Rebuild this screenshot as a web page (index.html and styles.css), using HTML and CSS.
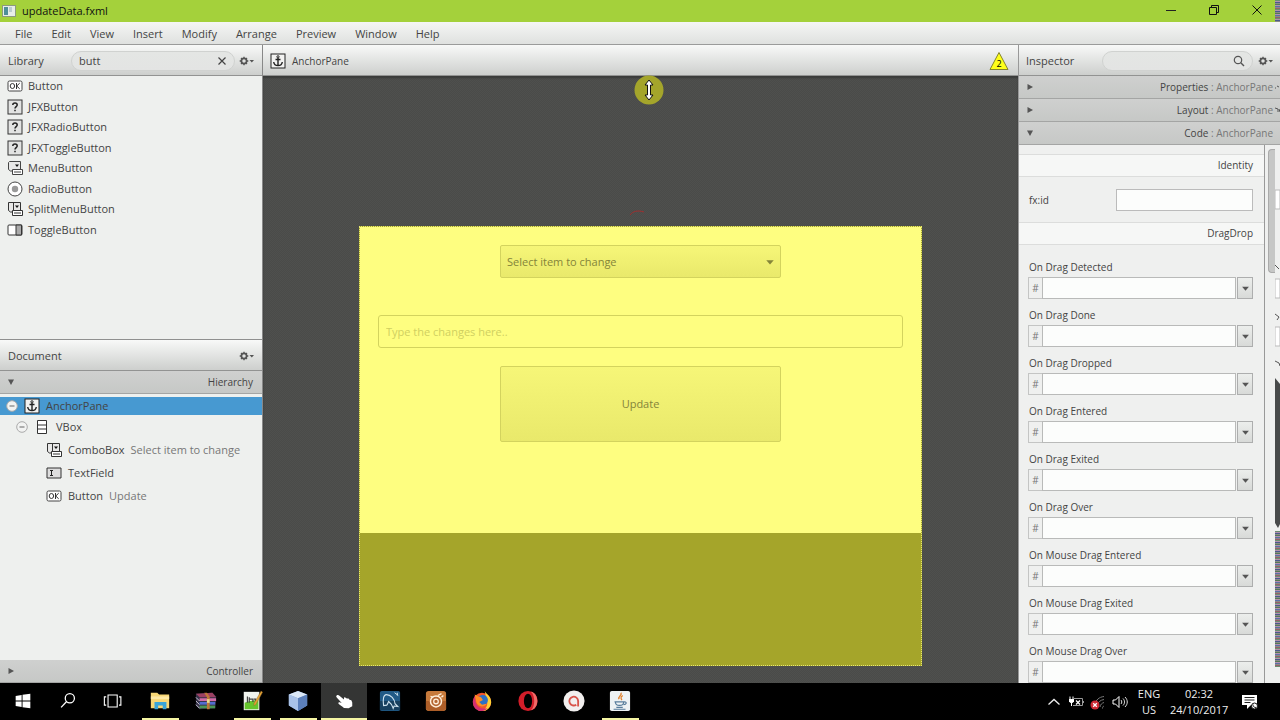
FILE: index.html
```html
<!DOCTYPE html>
<html lang="en">
<head>
<meta charset="utf-8">
<title>updateData.fxml</title>
<link rel="stylesheet" href="styles.css">
</head>
<body>
<svg class="defs" aria-hidden="true">
  <defs>
    <symbol id="i-ok" viewBox="0 0 16 16"><rect x="1" y="3" width="14" height="10" rx="1.500" fill="#fff" stroke="#444"/><ellipse cx="5.400" cy="8" rx="2.200" ry="2.500" fill="none" stroke="#333"/><path d="M9.500 5v6M12.700 5.200L9.700 8l3 2.800" fill="none" stroke="#333"/></symbol>
    <symbol id="i-unknown" viewBox="0 0 16 16"><rect x="1" y="1" width="14" height="14" fill="#e2e3e2" stroke="#333"/><path d="M5.800 6c0-2.600 4.400-2.600 4.400 0 0 1.500-2.200 1.700-2.200 3.400M8 10.800v1.500" fill="none" stroke="#222" stroke-width="1.500"/></symbol>
    <symbol id="i-menubtn" viewBox="0 0 16 16"><path d="M5 11H3.500L1.500 9.500v-7l1-1h11v8" fill="#e8e8e7" stroke="#444"/><path d="M8 4.500h4L10 7z" fill="#111"/><path d="M5.500 9.500h10v5h-10zM7 12h7" fill="#fff" stroke="#444"/></symbol>
    <symbol id="i-splitbtn" viewBox="0 0 16 16"><path d="M5 11H3.500L1.500 9.500v-8h12v8M6.500 1.500v8" fill="#e8e8e7" stroke="#333"/><path d="M8 4.500h4L10 7z" fill="#111"/><path d="M5.500 9.500h10v5h-10zM7 12h7" fill="#fff" stroke="#333"/></symbol>
    <symbol id="i-radio" viewBox="0 0 16 16"><circle cx="8" cy="8" r="7" fill="#fff" stroke="#444"/><circle cx="8" cy="8" r="3.200" fill="#999"/></symbol>
    <symbol id="i-toggle" viewBox="0 0 16 16"><rect x="1" y="3" width="14" height="10" rx="1" fill="#fff" stroke="#333"/><path d="M9 3h5.500v10H9z" fill="#aaa" stroke="#333"/></symbol>
    <symbol id="i-anchor" viewBox="0 0 16 16"><rect x="1" y="1" width="14" height="14" fill="#f2f2f1" stroke="#222"/><circle cx="8" cy="3.800" r="1.100" fill="none" stroke="#222"/><path d="M8 5v7.500M5.500 6.500h5M3.700 9c.3 2.400 2 3.600 4.300 3.600S12 11.400 12.300 9" fill="none" stroke="#222" stroke-width="1.400"/></symbol>
    <symbol id="i-vbox" viewBox="0 0 16 16"><path d="M3.500 1.500h9v13h-9zM3.500 6h9M3.500 10h9" fill="#fff" stroke="#333"/></symbol>
    <symbol id="i-textfield" viewBox="0 0 16 16"><path d="M1 3h14v10H1z" fill="#ddd" stroke="#333"/><path d="M4 5.500h3M4 10.500h3M5.500 5.500v5" stroke="#222"/></symbol>
    <symbol id="i-gear" viewBox="0 0 16 10"><circle cx="5" cy="5" r="2.600" fill="none" stroke="#555" stroke-width="1.700"/><path d="M5 .7v1.600M5 7.700v1.600M.7 5h1.600M7.700 5h1.600M2 2l1 1M7 7l1 1M8 2L7 3M3 7L2 8" stroke="#555" stroke-width="1.300"/><path d="M10.500 4h4.500l-2.200 2.600z" fill="#555"/></symbol>
    <symbol id="i-minus" viewBox="0 0 12 12"><circle cx="6" cy="6" r="5.300" fill="#f2f3f2" stroke="#aaa"/><path d="M3.500 6h5" stroke="#666"/></symbol>
    <symbol id="i-right" viewBox="0 0 8 8"><path d="M1.500 1L7 4 1.500 7z" fill="#555"/></symbol>
    <symbol id="i-down" viewBox="0 0 8 8"><path d="M1 1.500h6L4 7z" fill="#555"/></symbol>
    <symbol id="i-caret" viewBox="0 0 8 8"><path d="M1 2.500h6L4 6z" fill="currentColor"/></symbol>
  </defs>
</svg>

<header class="titlebar">
  <svg class="app-icon" viewBox="0 0 14 12"><rect x=".5" y=".5" width="13" height="11" fill="#e8eee8" stroke="#8d9a80"/><path d="M2 2h4v8H2z" fill="#4f8f98"/><path d="M7 2h3v5H7z" fill="#bccdd0"/></svg>
  <h1 class="title">updateData.fxml</h1>
  <div class="window-buttons">
    <button aria-label="Minimize"><svg viewBox="0 0 12 12"><path d="M1 6.500h10" stroke="#222" fill="none"/></svg></button>
    <button aria-label="Restore"><svg viewBox="0 0 12 12"><path d="M1.500 3.500h7v7h-7zM3.500 3V1.500h7v7H9" stroke="#111" fill="none"/></svg></button>
    <button aria-label="Close"><svg viewBox="0 0 12 12"><path d="M1.500 1.500l9 9M10.500 1.500l-9 9" stroke="#111" fill="none"/></svg></button>
  </div>
</header>

<nav class="menubar">
  <button>File</button><button>Edit</button><button>View</button><button>Insert</button><button>Modify</button><button>Arrange</button><button>Preview</button><button>Window</button><button>Help</button>
</nav>

<main class="workspace">
  <div class="side">
    <section class="library">
      <div class="bar">
        <h2 class="bar-title">Library</h2>
        <div class="search">
          <input type="text" value="butt" aria-label="Search library">
          <button aria-label="Clear"><svg class="clear" viewBox="0 0 10 10"><path d="M1.500 1.500l7 7M8.500 1.500l-7 7" stroke="#444" stroke-width="1.200"/></svg></button>
        </div>
        <button class="gear" aria-label="Library options"><svg><use href="#i-gear"/></svg></button>
      </div>
      <ul class="items">
        <li><svg class="icon"><use href="#i-ok"/></svg>Button</li>
        <li><svg class="icon"><use href="#i-unknown"/></svg>JFXButton</li>
        <li><svg class="icon"><use href="#i-unknown"/></svg>JFXRadioButton</li>
        <li><svg class="icon"><use href="#i-unknown"/></svg>JFXToggleButton</li>
        <li><svg class="icon"><use href="#i-menubtn"/></svg>MenuButton</li>
        <li><svg class="icon"><use href="#i-radio"/></svg>RadioButton</li>
        <li><svg class="icon"><use href="#i-splitbtn"/></svg>SplitMenuButton</li>
        <li><svg class="icon"><use href="#i-toggle"/></svg>ToggleButton</li>
      </ul>
    </section>
    <section class="document">
      <div class="bar">
        <h2 class="bar-title">Document</h2>
        <button class="gear" aria-label="Document options"><svg><use href="#i-gear"/></svg></button>
      </div>
      <button class="fold"><svg class="tri"><use href="#i-down"/></svg><span>Hierarchy</span></button>
      <ul class="tree">
        <li class="selected"><svg class="toggle"><use href="#i-minus"/></svg><svg class="icon"><use href="#i-anchor"/></svg>AnchorPane</li>
        <li class="level-1"><svg class="toggle"><use href="#i-minus"/></svg><svg class="icon"><use href="#i-vbox"/></svg>VBox</li>
        <li class="level-2"><svg class="icon"><use href="#i-splitbtn"/></svg>ComboBox<span class="info">Select item to change</span></li>
        <li class="level-2"><svg class="icon"><use href="#i-textfield"/></svg>TextField</li>
        <li class="level-2"><svg class="icon"><use href="#i-ok"/></svg>Button<span class="info">Update</span></li>
      </ul>
      <button class="fold"><svg class="tri"><use href="#i-right"/></svg><span>Controller</span></button>
    </section>
  </div>

  <section class="editor">
    <div class="bar">
      <svg class="icon"><use href="#i-anchor"/></svg>
      <span class="crumb">AnchorPane</span>
      <svg class="warning" viewBox="0 0 20 20"><path d="M10 1.500L19 18.500H1z" fill="#ffff1a" stroke="#85852a"/><text x="10" y="16" text-anchor="middle">2</text></svg>
    </div>
    <div class="stage">
      <svg class="cursor" viewBox="0 0 30 30"><circle cx="15" cy="15" r="14.500" fill="#a4a52b"/><path d="M15 5l4 5h-2.500v10H19l-4 5-4-5h2.500V10H11z" fill="#fff" stroke="#111"/></svg>
      <svg class="trace" viewBox="0 0 20 8"><path d="M2 6c3-4 8-5 14-3" fill="none" stroke="#a02f2f"/></svg>
      <form class="scene">
        <div class="vbox">
          <div class="combo">
            <select aria-label="Item"><option>Select item to change</option></select>
            <svg class="combo-arrow"><use href="#i-caret"/></svg>
          </div>
          <input class="change" type="text" placeholder="Type the changes here.." aria-label="Changes">
          <button class="update" type="button">Update</button>
        </div>
      </form>
    </div>
  </section>

  <aside class="inspector">
    <div class="bar">
      <h2 class="bar-title">Inspector</h2>
      <div class="search">
        <input type="text" aria-label="Search inspector">
        <svg class="lens" viewBox="0 0 12 12"><circle cx="5" cy="5" r="3.700" fill="none" stroke="#555" stroke-width="1.200"/><path d="M7.800 7.800L11 11" stroke="#555" stroke-width="1.400"/></svg>
      </div>
      <button class="gear" aria-label="Inspector options"><svg><use href="#i-gear"/></svg></button>
    </div>
    <button class="fold"><svg class="tri"><use href="#i-right"/></svg><span>Properties <i>: AnchorPane</i></span></button>
    <button class="fold"><svg class="tri"><use href="#i-right"/></svg><span>Layout <i>: AnchorPane</i></span></button>
    <button class="fold"><svg class="tri"><use href="#i-down"/></svg><span>Code <i>: AnchorPane</i></span></button>
    <div class="props">
      <div class="props-body">
        <h3 class="group">Identity</h3>
        <div class="fxid"><label for="fxid">fx:id</label><input id="fxid" type="text"></div>
        <h3 class="group">DragDrop</h3>
        <div class="events">
          <div class="event"><label for="e1">On Drag Detected</label><div class="field"><span>#</span><input id="e1" type="text"><button aria-label="Choose"><svg><use href="#i-caret"/></svg></button></div></div>
          <div class="event"><label for="e2">On Drag Done</label><div class="field"><span>#</span><input id="e2" type="text"><button aria-label="Choose"><svg><use href="#i-caret"/></svg></button></div></div>
          <div class="event"><label for="e3">On Drag Dropped</label><div class="field"><span>#</span><input id="e3" type="text"><button aria-label="Choose"><svg><use href="#i-caret"/></svg></button></div></div>
          <div class="event"><label for="e4">On Drag Entered</label><div class="field"><span>#</span><input id="e4" type="text"><button aria-label="Choose"><svg><use href="#i-caret"/></svg></button></div></div>
          <div class="event"><label for="e5">On Drag Exited</label><div class="field"><span>#</span><input id="e5" type="text"><button aria-label="Choose"><svg><use href="#i-caret"/></svg></button></div></div>
          <div class="event"><label for="e6">On Drag Over</label><div class="field"><span>#</span><input id="e6" type="text"><button aria-label="Choose"><svg><use href="#i-caret"/></svg></button></div></div>
          <div class="event"><label for="e7">On Mouse Drag Entered</label><div class="field"><span>#</span><input id="e7" type="text"><button aria-label="Choose"><svg><use href="#i-caret"/></svg></button></div></div>
          <div class="event"><label for="e8">On Mouse Drag Exited</label><div class="field"><span>#</span><input id="e8" type="text"><button aria-label="Choose"><svg><use href="#i-caret"/></svg></button></div></div>
          <div class="event"><label for="e9">On Mouse Drag Over</label><div class="field"><span>#</span><input id="e9" type="text"><button aria-label="Choose"><svg><use href="#i-caret"/></svg></button></div></div>
        </div>
      </div>
      <div class="scroll"><div class="thumb"></div></div>
    </div>
  </aside>
</main>

<svg class="edge" viewBox="0 0 5 683" aria-hidden="true">
  <defs><pattern id="noise" width="5" height="9" patternUnits="userSpaceOnUse"><path d="M0 .5h5" stroke="#6a8f70"/><path d="M0 1.500h5M0 5.500h5" stroke="#b58fae"/><path d="M0 2.500h5" stroke="#4a5a8c"/><path d="M0 3.500h5M0 7.500h5" stroke="#8a8a88"/><path d="M0 4.500h5" stroke="#557a55"/><path d="M0 6.500h5" stroke="#5b6fa8"/><path d="M0 8.500h5" stroke="#97606b"/></pattern></defs>
  <path d="M0 0h5v22H0z" fill="url(#noise)"/>
  <path d="M0 190h5v19H0zM0 279h5v19H0zM0 327h5v19H0z" fill="#fff" stroke="#bbb"/>
  <path d="M0 88h1M2 86l2 1M0 108l3 1v3M4 109l1 3M0 265l4 4M0 314l4 3-2 3M0 361l4 2 1 3" fill="none" stroke="#555"/>
  <path d="M0 378l5 6v140l-2 4-3-5z" fill="#484a4a"/>
  <path d="M0 531h5v136H0z" fill="url(#noise)"/>
</svg>

<footer class="taskbar">
  <div class="apps">
    <button aria-label="Start"><svg viewBox="0 0 24 24"><path d="M4 6.500l6.500-1v6H4zM11.500 5.300L20 4v7.500h-8.500zM4 12.500h6.500v6l-6.500-1zM11.500 12.500H20V20l-8.500-1.300z" fill="#fff"/></svg></button>
    <button aria-label="Search"><svg viewBox="0 0 24 24"><circle cx="14" cy="9" r="5" fill="none" stroke="#fff" stroke-width="1.400"/><path d="M10.500 12.500L4.500 19" stroke="#fff" stroke-width="1.400"/></svg></button>
    <button aria-label="Task view"><svg viewBox="0 0 24 24"><path d="M5.500 5.500h10v13h-10zM3.500 7.500h-2v9h2M17.500 7.500h2v9h-2" fill="none" stroke="#fff" stroke-width="1.200"/></svg></button>
    <button class="running" aria-label="File Explorer"><svg viewBox="0 0 24 24"><path d="M2 3h7l2 2h11v15H2z" fill="#f8d775"/><path d="M2 7h20v3H2z" fill="#ffe9a5"/><path d="M6 21v-8h13v8h-4v-4h-5v4z" fill="#3aa5d8"/></svg></button>
    <button aria-label="WinRAR"><svg viewBox="0 0 24 24"><path d="M1 4l18-1 4 4v5l-1 8-17 1-4-4z" fill="#343047"/><path d="M1 4l4 4h18l-4-5z" fill="#9c4063"/><path d="M5 9h18v3H5z" fill="#d36ba6"/><path d="M5 13h17v3H5z" fill="#536cd0"/><path d="M5 17h17v3H5z" fill="#4c9655"/><path d="M1 8l4 4M1 12l4 4M1 16l4 4" stroke="#d9d3df"/><path d="M13 3l3 4v14h-3V8l-3-5z" fill="#bf7739"/><path d="M13 10h3v4h-3z" fill="#e8dd8f"/></svg></button>
    <button class="running" aria-label="Notepad++"><svg viewBox="0 0 24 24"><path d="M3 2h17v20H3z" fill="#f1f3ee"/><path d="M4 14c5-3 10-2 15-4v11H4z" fill="#66c52d"/><path d="M7 7v7M9 8v6M9 10h4v3M14 10h2v3" stroke="#444" fill="none" stroke-width="1.300"/><path d="M22 1l1.500 1.500L16 16l-2 1 .3-2.500z" fill="#e8a635" stroke="#8f642a" stroke-width=".5"/></svg></button>
    <button class="running" aria-label="NetBeans"><svg viewBox="0 0 24 24"><path d="M12 1l10 4v12l-10 6-10-6V5z" fill="#7d9ed0"/><path d="M12 1l10 4-10 4L2 5z" fill="#dce9f8"/><path d="M2 5l10 4v14L2 17z" fill="#a9c2e8"/><path d="M12 9l10-4v12l-10 6z" fill="#5b7fba"/></svg></button>
    <button class="active" aria-label="Scene Builder"><svg viewBox="0 0 24 24"><path d="M4 6c1-1 2.300-.4 3 .3l5 4V8l2 .4 1 1 2-.2 1 1.500 2 .4 1 2.500v4L17 20l-5-.5c-2-1.500-4.500-3-6-4.500-.5-1.500 1-1.800 2-1.300l1.500.5L4.300 8.500C3.300 7.500 3.300 6.600 4 6z" fill="#fff"/></svg></button>
    <button aria-label="MySQL Workbench"><svg viewBox="0 0 24 24"><rect x="1" y="1" width="22" height="22" rx="2" fill="#215a86"/><path d="M1 12h22v10H1z" fill="#17405f"/><path d="M5 17C4 10 5 5 8 5c5 0 9 5 9.500 10l3 3-4-.5-1 2.500c-1-4-3-6-5-7.500-1 2-1 3-2 4z" fill="none" stroke="#cfe2ee" stroke-width="1.200"/><path d="M17 3l4 3M20 3v3" stroke="#d8eaf4"/></svg></button>
    <button aria-label="Recorder"><svg viewBox="0 0 24 24"><rect x="1" y="1" width="22" height="22" rx="3" fill="#c77a3b"/><path d="M1 12h22v8l-3 3H4l-3-3z" fill="#ad5e28"/><circle cx="12" cy="12.500" r="6" fill="#b66732" stroke="#fff0dc" stroke-width="1.600"/><circle cx="12" cy="12.500" r="2.500" fill="none" stroke="#fff0dc" stroke-width="1.400"/><path d="M6 7l3 1M14 6l4-2M18 8l2-2" stroke="#fff0dc" stroke-width="1.500"/></svg></button>
    <button aria-label="Firefox"><svg viewBox="0 0 24 24"><circle cx="12" cy="13" r="10" fill="#f0562b"/><path d="M15 1c1 3 7 5 7 12 0 5-4 10-10 10 5-3 7-7 5-12z" fill="#ffcf35"/><path d="M2 12c0 7 4 11 10 11 3 0 4-1 6-3-7 1-11-1-13-7L4 6z" fill="#d52f72"/><circle cx="13" cy="11" r="5.500" fill="#2d70c5"/><path d="M4 5l4 2 3 1 2 3-4 2 3 3 5-1c-2 4-9 4-11-1z" fill="#ff8c22"/></svg></button>
    <button aria-label="Opera"><svg viewBox="0 0 24 24"><ellipse cx="12" cy="12" rx="10.500" ry="11" fill="#d21d29"/><path d="M15 2c9 1 10 18 0 20 5-3 5-17 0-20z" fill="#f06b68"/><ellipse cx="12" cy="12" rx="4.500" ry="8" fill="#000"/></svg></button>
    <button aria-label="Avira"><svg viewBox="0 0 24 24"><circle cx="12" cy="12" r="11.500" fill="#f2efee"/><path d="M16.500 18v-6a4.800 4.800 0 1 0-2 4" fill="none" stroke="#d8544a" stroke-width="2"/></svg></button>
    <button class="running" aria-label="Java"><svg viewBox="0 0 24 24"><rect x="1" y="1" width="22" height="22" rx="2" fill="#eef2f4"/><path d="M13 3c2 3-4 4-2 7M15 6c-3 2-2 3-1 5" stroke="#e08331" stroke-width="1.500" fill="none"/><path d="M6 13h11M7 13c0 5 9 5 9 0M17 13c3 0 2 3-1 3M8 19h7M5 21h13" fill="none" stroke="#587c9b" stroke-width="1.200"/></svg></button>
  </div>
  <div class="tray">
    <button aria-label="Show hidden icons"><svg viewBox="0 0 16 16"><path d="M2.500 10.500L8 5.500l5.500 5" fill="none" stroke="#eee" stroke-width="1.300"/></svg></button>
    <button aria-label="Battery"><svg viewBox="0 0 16 16"><path d="M6 4.500h8.500v7H5M15.500 7v2" fill="none" stroke="#999"/><path d="M8 6.500l4 4M12 6.500l-4 4" stroke="#fff" stroke-width="1.200"/><path d="M1 5h5v2.500L4.500 9h-2L1 7.500z" fill="#fff"/><path d="M2 2.500V5M5 2.500V5M3.500 9v3" stroke="#fff"/></svg></button>
    <button aria-label="Network"><svg viewBox="0 0 16 16"><path d="M5 10C6 6 9 3 14 2.500M7.500 11c.5-3 3-5 6.500-5.500M10 13c.3-2.500 2-4 4-4.500M12.500 14.500c0-1.500.5-2 1.500-2.500" fill="none" stroke="#777"/><circle cx="5" cy="11" r="4.500" fill="#cf2a35"/><path d="M3.200 9.200l3.600 3.600M6.800 9.200l-3.600 3.600" stroke="#fff" stroke-width="1.300"/></svg></button>
    <button aria-label="Volume"><svg viewBox="0 0 16 16"><path d="M1 6h2.500L7 2.500v11L3.500 10H1z" fill="none" stroke="#fff"/><path d="M9 6c1 1 1 3 0 4M11 4.500c2 2 2 5 0 7M13 3c3 3 3 7 0 10" fill="none" stroke="#ddd"/></svg></button>
    <button class="lang">ENG<br>US</button>
    <button class="clock"><time>02:32<br>24/10/2017</time></button>
    <button class="notes" aria-label="Notifications"><svg viewBox="0 0 16 16"><path d="M0 1h15v10H9l-4 4v-4H0z" fill="#fff"/><path d="M2.500 3.500h10M2.500 6h10M2.500 8.500h6" stroke="#222"/><circle cx="12.500" cy="12" r="3" fill="#fff" stroke="#111"/><path d="M11 10.500c0 2 1 3 3 3" fill="none" stroke="#222"/></svg></button>
  </div>
</footer>
</body>
</html>
```
FILE: styles.css
```css
* { box-sizing: border-box; }
body {
  margin: 0;
  height: 100vh;
  display: flex;
  flex-direction: column;
  position: relative;
  overflow: hidden;
  font: 11px/16px "Open Sans", "Noto Sans", sans-serif;
  color: #444;
  background: #eef0ee;
}
button, input, select { font: inherit; color: inherit; margin: 0; padding: 0; border: 0; background: none; border-radius: 0; }
input { min-width: 0; outline: 0; }
h1, h2, h3, ul { margin: 0; padding: 0; font-weight: 400; font-size: inherit; list-style: none; }
svg { display: block; flex: none; }
.defs { position: absolute; width: 0; height: 0; }
.icon { width: 16px; height: 16px; }

.titlebar { flex: none; height: 22px; display: flex; align-items: center; padding: 0 17px 0 2px; background: #a4d13b; color: #111; }
.app-icon { width: 14px; height: 12px; margin-right: 6px; }
.title { flex: 1; }
.window-buttons { display: flex; gap: 31px; padding-bottom: 3px; }
.window-buttons svg { width: 12px; height: 12px; }

.menubar { flex: none; height: 23px; display: flex; gap: 19px; padding: 2px 0 0 15px; background: linear-gradient(#f5f6f5, #dfe1df); border-bottom: 1px solid #9a9b9a; }

.workspace { flex: 1; min-height: 0; display: grid; grid-template-columns: 262px minmax(0, 1fr) 262px; grid-template-rows: minmax(0, 1fr); }
.side { display: flex; flex-direction: column; min-height: 0; }
.library { flex: 0 0 294px; }
.document { flex: 1; min-height: 0; display: flex; flex-direction: column; border-top: 1px solid #8f908f; }

.bar { flex: none; height: 31px; display: flex; align-items: center; background: linear-gradient(#f8f9f8, #cdcfcd); border-bottom: 1px solid #929392; padding: 1px 7px 0 8px; }
.bar-title { flex: 1; }
.search { display: flex; align-items: center; height: 20px; border: 1px solid #d0d2d0; border-radius: 10px; background: linear-gradient(#e4e6e4, #e3e4e3); padding: 0 7px; }
.search input { flex: 1; height: 16px; }
.library .search { width: 164px; margin-right: 4px; }
.clear { width: 10px; height: 10px; }
.gear svg { width: 16px; height: 10px; }

.items { height: 164px; display: grid; grid-template-rows: repeat(8, minmax(0, 1fr)); }
.items li { display: flex; align-items: center; gap: 5px; padding-left: 7px; }

.fold { flex: none; width: 100%; height: 23px; display: flex; align-items: center; justify-content: space-between; padding: 0 9px 0 7px; background: linear-gradient(#cfd0cf, #c6c8c6); border-bottom: 1px solid #a4a5a4; font-size: 10px; }
.fold i { font-style: normal; color: #777; }
.tri { width: 8px; height: 8px; }

.tree { flex: 1; padding-top: 3px; }
.tree li { height: 23px; display: flex; align-items: center; gap: 6px; }
.tree .selected { height: 18px; padding-left: 6px; background: #4799d1; }
.tree .level-1 { padding-left: 16px; }
.tree .level-2 { padding-left: 46px; }
.toggle { width: 12px; height: 12px; }
.info { color: #777; }

.editor { display: flex; flex-direction: column; min-width: 0; border-left: 1px solid #888; }
.editor .bar { padding: 1px 9px 0 7px; gap: 6px; }
.crumb { flex: 1; font-size: 10px; }
.warning { width: 20px; height: 20px; font-size: 9px; }
.stage { flex: 1; position: relative; padding-top: 150px; background: repeating-conic-gradient(#4f504e 0 25%, #4a4b49 0 50%) 0 0 / 2px 2px; box-shadow: inset 0 2px 2px #3a3b3a; }
.cursor { position: absolute; top: -1px; left: calc(50% - 7px); width: 30px; height: 30px; }
.trace { position: absolute; top: 133px; left: calc(50% - 13px); width: 20px; height: 8px; }
.scene { width: 75%; max-width: 563px; min-height: 440px; margin: 0 auto; background: #a5a52a; border: 1px dotted #e8e872; }
.vbox { display: flex; flex-direction: column; align-items: center; height: 306px; padding: 18px; background: #fefe80; color: #84843a; }
.combo { position: relative; width: 281px; height: 33px; margin-bottom: 37px; }
.combo select { width: 100%; height: 100%; appearance: none; padding: 0 6px; }
.combo select, .update { border: 1px solid #d3d35e; border-radius: 2px; background: linear-gradient(#f6f678, #e9e96b); }
.combo-arrow { position: absolute; right: 6px; top: 12px; width: 10px; height: 10px; }
.change { width: 100%; height: 33px; margin-bottom: 18px; padding: 0 7px; border: 1px solid #d3d35e; border-radius: 3px; }
.change::placeholder { color: #d0d060; opacity: 1; }
.update { width: 281px; height: 76px; }

.inspector { min-width: 0; display: flex; flex-direction: column; border-left: 1px solid #999; background: #eff0ef; }
.inspector .search { width: 151px; margin-right: 5px; }
.inspector .bar { padding: 1px 6px 0 7px; }
.lens { width: 12px; height: 12px; }
.inspector .fold { padding-right: 7px; }
.props { flex: 1; min-height: 0; display: flex; overflow: hidden; padding-right: 5px; font-size: 10px; }
.props-body { flex: 1; min-width: 0; padding-top: 9px; }
.group { height: 23px; padding-right: 11px; line-height: 21px; text-align: right; background: #f6f7f6; border-top: 1px solid #dcdddc; border-bottom: 1px solid #dcdddc; }
.fxid { height: 45px; display: flex; align-items: center; justify-content: space-between; padding: 0 11px 0 10px; }
.fxid input { width: 137px; height: 22px; background: #fcfdfc; border: 1px solid #bbb; }
.events { padding: 14px 11px 0 9px; }
.event { height: 48px; }
.event label { display: block; height: 18px; padding-left: 1px; }
.field { display: flex; height: 22px; }
.field span { width: 14px; border: 1px solid #c4c5c4; border-right: 0; line-height: 20px; text-align: center; color: #777; }
.field input { flex: 1; background: #fcfdfc; border: 1px solid #b9bab9; }
.field button { width: 16px; margin-left: 1px; display: grid; place-items: center; border: 1px solid #adaeae; background: linear-gradient(#eceeec, #d8dad8); color: #555; }
.field button svg { width: 9px; height: 9px; }
.scroll { width: 11px; border-left: 1px solid #999; padding: 4px 0 0 3px; }
.thumb { height: 124px; background: #c6c7c6; border: 1px solid #aaa; border-right: 0; border-radius: 4px 0 0 4px; }
.edge { position: absolute; top: 0; right: 0; width: 5px; height: 683px; }

.taskbar { flex: none; height: 37px; display: flex; justify-content: space-between; background: #000; color: #eee; }
.apps { display: flex; }
.apps button { width: 46px; height: 37px; display: grid; place-items: center; border-bottom: 2px solid transparent; }
.apps button:first-child { width: 45px; }
.apps svg { width: 22px; height: 22px; }
.apps .running { background: linear-gradient(#f5f5a3, #f5f5a3) center 35px / 37px 2px no-repeat border-box; }
.apps .active { background: #343534; border-color: #f5f5a3; }
.tray { display: flex; align-items: center; padding-right: 22px; gap: 6px; }
.tray svg { width: 16px; height: 16px; }
.lang { width: 30px; }
.clock { width: 58px; }
.notes { margin-left: 8px; }
```
